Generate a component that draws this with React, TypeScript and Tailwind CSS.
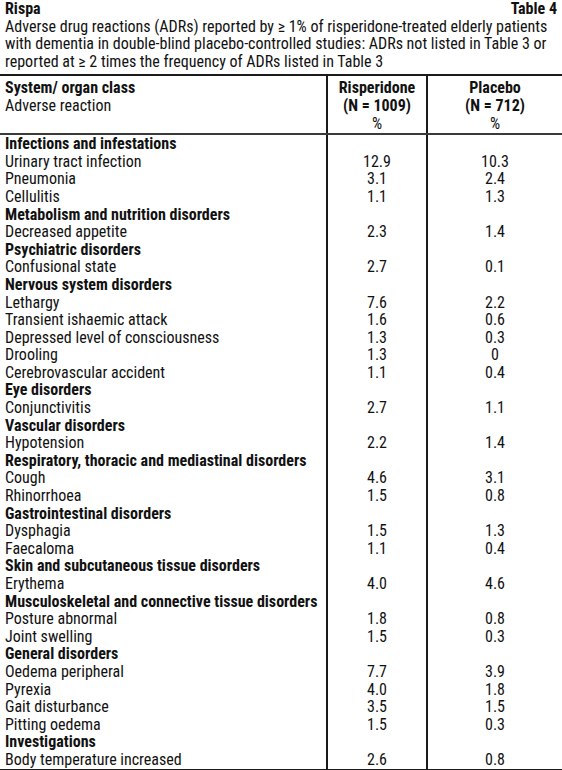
import React from 'react';

type Row = { label: string; group?: boolean; r?: string; p?: string };

const rows: Row[] = [
  { label: 'Infections and infestations', group: true },
  { label: 'Urinary tract infection', r: '12.9', p: '10.3' },
  { label: 'Pneumonia', r: '3.1', p: '2.4' },
  { label: 'Cellulitis', r: '1.1', p: '1.3' },
  { label: 'Metabolism and nutrition disorders', group: true },
  { label: 'Decreased appetite', r: '2.3', p: '1.4' },
  { label: 'Psychiatric disorders', group: true },
  { label: 'Confusional state', r: '2.7', p: '0.1' },
  { label: 'Nervous system disorders', group: true },
  { label: 'Lethargy', r: '7.6', p: '2.2' },
  { label: 'Transient ishaemic attack', r: '1.6', p: '0.6' },
  { label: 'Depressed level of consciousness', r: '1.3', p: '0.3' },
  { label: 'Drooling', r: '1.3', p: '0' },
  { label: 'Cerebrovascular accident', r: '1.1', p: '0.4' },
  { label: 'Eye disorders', group: true },
  { label: 'Conjunctivitis', r: '2.7', p: '1.1' },
  { label: 'Vascular disorders', group: true },
  { label: 'Hypotension', r: '2.2', p: '1.4' },
  { label: 'Respiratory, thoracic and mediastinal disorders', group: true },
  { label: 'Cough', r: '4.6', p: '3.1' },
  { label: 'Rhinorrhoea', r: '1.5', p: '0.8' },
  { label: 'Gastrointestinal disorders', group: true },
  { label: 'Dysphagia', r: '1.5', p: '1.3' },
  { label: 'Faecaloma', r: '1.1', p: '0.4' },
  { label: 'Skin and subcutaneous tissue disorders', group: true },
  { label: 'Erythema', r: '4.0', p: '4.6' },
  { label: 'Musculoskeletal and connective tissue disorders', group: true },
  { label: 'Posture abnormal', r: '1.8', p: '0.8' },
  { label: 'Joint swelling', r: '1.5', p: '0.3' },
  { label: 'General disorders', group: true },
  { label: 'Oedema peripheral', r: '7.7', p: '3.9' },
  { label: 'Pyrexia', r: '4.0', p: '1.8' },
  { label: 'Gait disturbance', r: '3.5', p: '1.5' },
  { label: 'Pitting oedema', r: '1.5', p: '0.3' },
  { label: 'Investigations', group: true },
  { label: 'Body temperature increased', r: '2.6', p: '0.8' },
];

const App: React.FC = () => {
  return (
    <div className="w-[562px] bg-white text-[#111] font-['Roboto',sans-serif] [font-stretch:75%] text-[16px] leading-[17.6px] whitespace-nowrap">
      {/* title block */}
      <div className="px-[5px]">
        <div className="flex justify-between font-bold">
          <span>Rispa</span>
          <span>Table 4</span>
        </div>
        <p>
          Adverse drug reactions (ADRs) reported by ≥ 1% of risperidone-treated elderly patients
          <br />
          with dementia in double-blind placebo-controlled studies: ADRs not listed in Table 3 or
          <br />
          reported at ≥ 2 times the frequency of ADRs listed in Table 3
        </p>
      </div>

      {/* table */}
      <div className="mt-[4px] border-t-2 border-b-2 border-[#1a1a1a]">
        <div className="grid grid-cols-[326px_100px_1fr] border-b-2 border-[#3a3a3a]">
          <div className="px-[5px] pt-[3px] pb-[1px]">
            <div className="font-bold">System/ organ class</div>
            <div>Adverse reaction</div>
          </div>
          <div className="border-l-2 border-[#1a1a1a] pt-[3px] pb-[1px] text-center">
            <div className="font-bold">Risperidone</div>
            <div className="font-bold">(N = 1009)</div>
            <div>%</div>
          </div>
          <div className="border-l-2 border-[#1a1a1a] pt-[3px] pb-[1px] text-center">
            <div className="font-bold">Placebo</div>
            <div className="font-bold">(N = 712)</div>
            <div>%</div>
          </div>
        </div>

        <div className="grid grid-cols-[326px_100px_1fr]">
          <div className="px-[5px]">
            {rows.map((row) => (
              <div key={row.label} className={`h-[17.6px] ${row.group ? 'font-bold' : ''}`}>
                {row.label}
              </div>
            ))}
          </div>
          <div className="border-l-2 border-[#1a1a1a] text-center">
            {rows.map((row) => (
              <div key={row.label} className="h-[17.6px]">
                {row.r}
              </div>
            ))}
          </div>
          <div className="border-l-2 border-[#1a1a1a] text-center">
            {rows.map((row) => (
              <div key={row.label} className="h-[17.6px]">
                {row.p}
              </div>
            ))}
          </div>
        </div>
      </div>
    </div>
  );
};

export default App;
